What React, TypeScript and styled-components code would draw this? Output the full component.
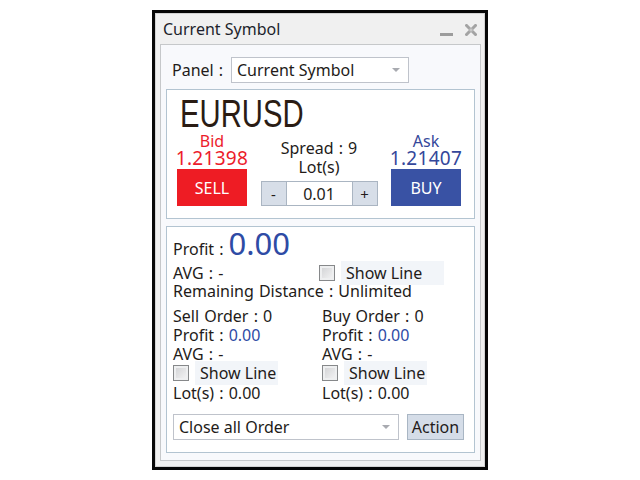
import React from 'react'
import styled, { createGlobalStyle } from 'styled-components'

const GlobalStyle = createGlobalStyle`
  html, body {
    margin: 0;
    padding: 0;
    background: #ffffff;
  }
  body {
    font-family: 'Noto Sans', 'Open Sans', sans-serif;
    font-size: 16px;
    word-spacing: 1px;
    color: #231b19;
  }
`

const Page = styled.div`
  width: 640px;
  height: 480px;
  box-sizing: border-box;
  padding: 10px 0 0 152px;
`

const Frame = styled.div`
  width: 336px;
  height: 460px;
  box-sizing: border-box;
  border: 3px solid #060606;
  display: flex;
`

const Window = styled.div`
  flex: 1;
  display: flex;
  flex-direction: column;
  background: #f0f0f0;
  border: 1px solid #d2d2d2;
  padding: 0 3px 5px 4px;
`

const TitleBar = styled.div`
  height: 30px;
  display: flex;
  align-items: center;
  justify-content: space-between;
  padding: 0 4px 0 3px;
`

const Title = styled.span`
  font-size: 16px;
  color: #1d1f2c;
  line-height: 30px;
  word-spacing: 0;
`

const TitleIcons = styled.div`
  display: flex;
  align-items: center;
  gap: 12px;
  padding-top: 2px;
`

const Panel = styled.div`
  flex: 1;
  display: flex;
  flex-direction: column;
  background: #f8f9fc;
  border: 1px solid #c6c8ca;
  padding: 12px 5px 6px 5px;
`

const PanelRow = styled.div`
  height: 25px;
  display: flex;
  align-items: center;
  padding-left: 6px;
  margin-bottom: 7px;
`

const PanelLabel = styled.span`
  width: 59px;
  line-height: 20px;
`

const Select = styled.div<{ $width: number }>`
  width: ${(p) => p.$width}px;
  height: 26px;
  box-sizing: border-box;
  background: #ffffff;
  border: 1px solid #bfc3cb;
  display: flex;
  align-items: center;
  justify-content: space-between;
  padding: 0 8px 0 5px;
  line-height: 20px;
  word-spacing: 0;
`

const Caret = styled.span`
  width: 0;
  height: 0;
  border-left: 4px solid transparent;
  border-right: 4px solid transparent;
  border-top: 4px solid #a8aab0;
`

const Box = styled.div<{ $height: number; $gap?: number }>`
  height: ${(p) => p.$height}px;
  margin-top: ${(p) => p.$gap ?? 0}px;
  box-sizing: border-box;
  background: #ffffff;
  border: 1px solid #b3c4d1;
  display: flex;
  flex-direction: column;
`

const SymbolName = styled.div`
  font-family: 'Liberation Sans', Arial, sans-serif;
  font-size: 38px;
  line-height: 38px;
  color: #2a1c14;
  margin: 5px 0 0 13px;
  transform: scaleX(0.77);
  transform-origin: left center;
`

const TradeRow = styled.div`
  display: grid;
  grid-template-columns: 70px 116px 70px;
  column-gap: 14px;
  align-items: end;
  padding: 0 12px 12px 10px;
`

const Side = styled.div<{ $color: string }>`
  display: flex;
  flex-direction: column;
  align-items: center;
  color: ${(p) => p.$color};
`

const SideLabel = styled.span`
  line-height: 16px;
`

const Price = styled.span`
  font-size: 19px;
  line-height: 18px;
  letter-spacing: 0.3px;
`

const TradeButton = styled.button<{ $bg: string }>`
  margin-top: 2px;
  width: 70px;
  height: 37px;
  border: none;
  background: ${(p) => p.$bg};
  color: #ffffff;
  font-family: inherit;
  font-size: 16px;
  padding: 0;
`

const Middle = styled.div`
  display: flex;
  flex-direction: column;
  align-items: center;
`

const MiddleText = styled.span`
  line-height: 19px;
`

const LotControl = styled.div`
  margin-top: 4px;
  display: flex;
  height: 25px;
`

const StepButton = styled.button`
  width: 26px;
  height: 25px;
  box-sizing: border-box;
  background: #d7dee8;
  border: 1px solid #aab5c2;
  font-family: inherit;
  font-size: 15px;
  color: #231b19;
  padding: 0;
`

const LotInput = styled.input`
  width: 65px;
  height: 25px;
  box-sizing: border-box;
  border: 1px solid #aab5c2;
  border-left: none;
  border-right: none;
  text-align: center;
  font-family: inherit;
  font-size: 16px;
  color: #231b19;
  padding: 0;
  outline: none;
`

const Details = styled.div`
  display: flex;
  flex-direction: column;
  padding: 0 8px 12px 6px;
`

const ProfitRow = styled.div`
  height: 32px;
  display: flex;
  align-items: baseline;
  gap: 5px;
`

const BigValue = styled.span`
  font-size: 31px;
  line-height: 32px;
  color: #2e4ba5;
`

const Line = styled.div`
  height: 20px;
  line-height: 20px;
  display: flex;
  align-items: center;
  white-space: nowrap;
`

const AvgRow = styled.div`
  margin-top: 2px;
  height: 20px;
  line-height: 20px;
  display: grid;
  grid-template-columns: 140px 16px auto;
  column-gap: 6px;
  align-items: center;
`

const Orders = styled.div`
  margin-top: 5px;
  display: grid;
  grid-template-columns: 149px 1fr;
  grid-auto-rows: 19.25px;
  align-items: center;
  line-height: 20px;
  white-space: nowrap;
`

const Value = styled.span`
  color: #2e4ba5;
`

const CheckRow = styled.div`
  display: flex;
  align-items: center;
  gap: 6px;
`

const CheckBox = styled.span`
  width: 16px;
  height: 16px;
  box-sizing: border-box;
  border: 1px solid #86888a;
  background: linear-gradient(135deg, #cfd0d2, #f6f6f7);
  box-shadow: inset 0 0 0 2px #eeeff0;
`

const CheckLabel = styled.span<{ $width: number }>`
  width: ${(p) => p.$width}px;
  height: 24px;
  line-height: 24px;
  box-sizing: border-box;
  padding-left: 5px;
  background: #f2f5f9;
  word-spacing: 0;
`

const ActionRow = styled.div`
  margin-top: 12px;
  display: flex;
  gap: 8px;
`

const ActionButton = styled.button`
  width: 57px;
  height: 26px;
  box-sizing: border-box;
  background: #d5dde8;
  border: 1px solid #a9b6c4;
  font-family: inherit;
  font-size: 16px;
  color: #231b19;
  padding: 0;
`

const ShowLine = ({ width }: { width: number }) => (
  <CheckRow>
    <CheckBox />
    <CheckLabel $width={width}>Show Line</CheckLabel>
  </CheckRow>
)

const App = () => (
  <Page>
    <GlobalStyle />
    <Frame>
      <Window>
        <TitleBar>
          <Title>Current Symbol</Title>
          <TitleIcons>
            <svg width='13' height='12' viewBox='0 0 13 12'>
              <rect x='0' y='9' width='13' height='3' fill='#9c9c9c' />
            </svg>
            <svg width='12' height='12' viewBox='0 0 12 12'>
              <path
                d='M1.5 1.5 L10.5 10.5 M10.5 1.5 L1.5 10.5'
                stroke='#a3a3a3'
                strokeWidth='3'
                strokeLinecap='square'
              />
              <rect x='4.5' y='4.5' width='3' height='3' fill='#c8c8c8' />
            </svg>
          </TitleIcons>
        </TitleBar>

        <Panel>
          <PanelRow>
            <PanelLabel>Panel :</PanelLabel>
            <Select $width={178}>
              <span>Current Symbol</span>
              <Caret />
            </Select>
          </PanelRow>

          <Box $height={130}>
            <SymbolName>EURUSD</SymbolName>
            <TradeRow>
              <Side $color='#ec1c2b'>
                <SideLabel>Bid</SideLabel>
                <Price>1.21398</Price>
                <TradeButton $bg='#ee1c24'>SELL</TradeButton>
              </Side>
              <Middle>
                <MiddleText>Spread : 9</MiddleText>
                <MiddleText>Lot(s)</MiddleText>
                <LotControl>
                  <StepButton>-</StepButton>
                  <LotInput defaultValue='0.01' readOnly />
                  <StepButton>+</StepButton>
                </LotControl>
              </Middle>
              <Side $color='#34479a'>
                <SideLabel>Ask</SideLabel>
                <Price>1.21407</Price>
                <TradeButton $bg='#3952a4'>BUY</TradeButton>
              </Side>
            </TradeRow>
          </Box>

          <Box $height={227} $gap={7}>
            <Details>
              <ProfitRow>
                <span>Profit :</span>
                <BigValue>0.00</BigValue>
              </ProfitRow>
              <AvgRow>
                <span>AVG : -</span>
                <CheckBox />
                <CheckLabel $width={103}>Show Line</CheckLabel>
              </AvgRow>
              <Line>Remaining Distance : Unlimited</Line>
              <Orders>
                <span>Sell Order : 0</span>
                <span>Buy Order : 0</span>
                <span>
                  Profit : <Value>0.00</Value>
                </span>
                <span>
                  Profit : <Value>0.00</Value>
                </span>
                <span>AVG : -</span>
                <span>AVG : -</span>
                <ShowLine width={83} />
                <ShowLine width={83} />
                <span>Lot(s) : 0.00</span>
                <span>Lot(s) : 0.00</span>
              </Orders>
              <ActionRow>
                <Select $width={226}>
                  <span>Close all Order</span>
                  <Caret />
                </Select>
                <ActionButton>Action</ActionButton>
              </ActionRow>
            </Details>
          </Box>
        </Panel>
      </Window>
    </Frame>
  </Page>
)

export default App
